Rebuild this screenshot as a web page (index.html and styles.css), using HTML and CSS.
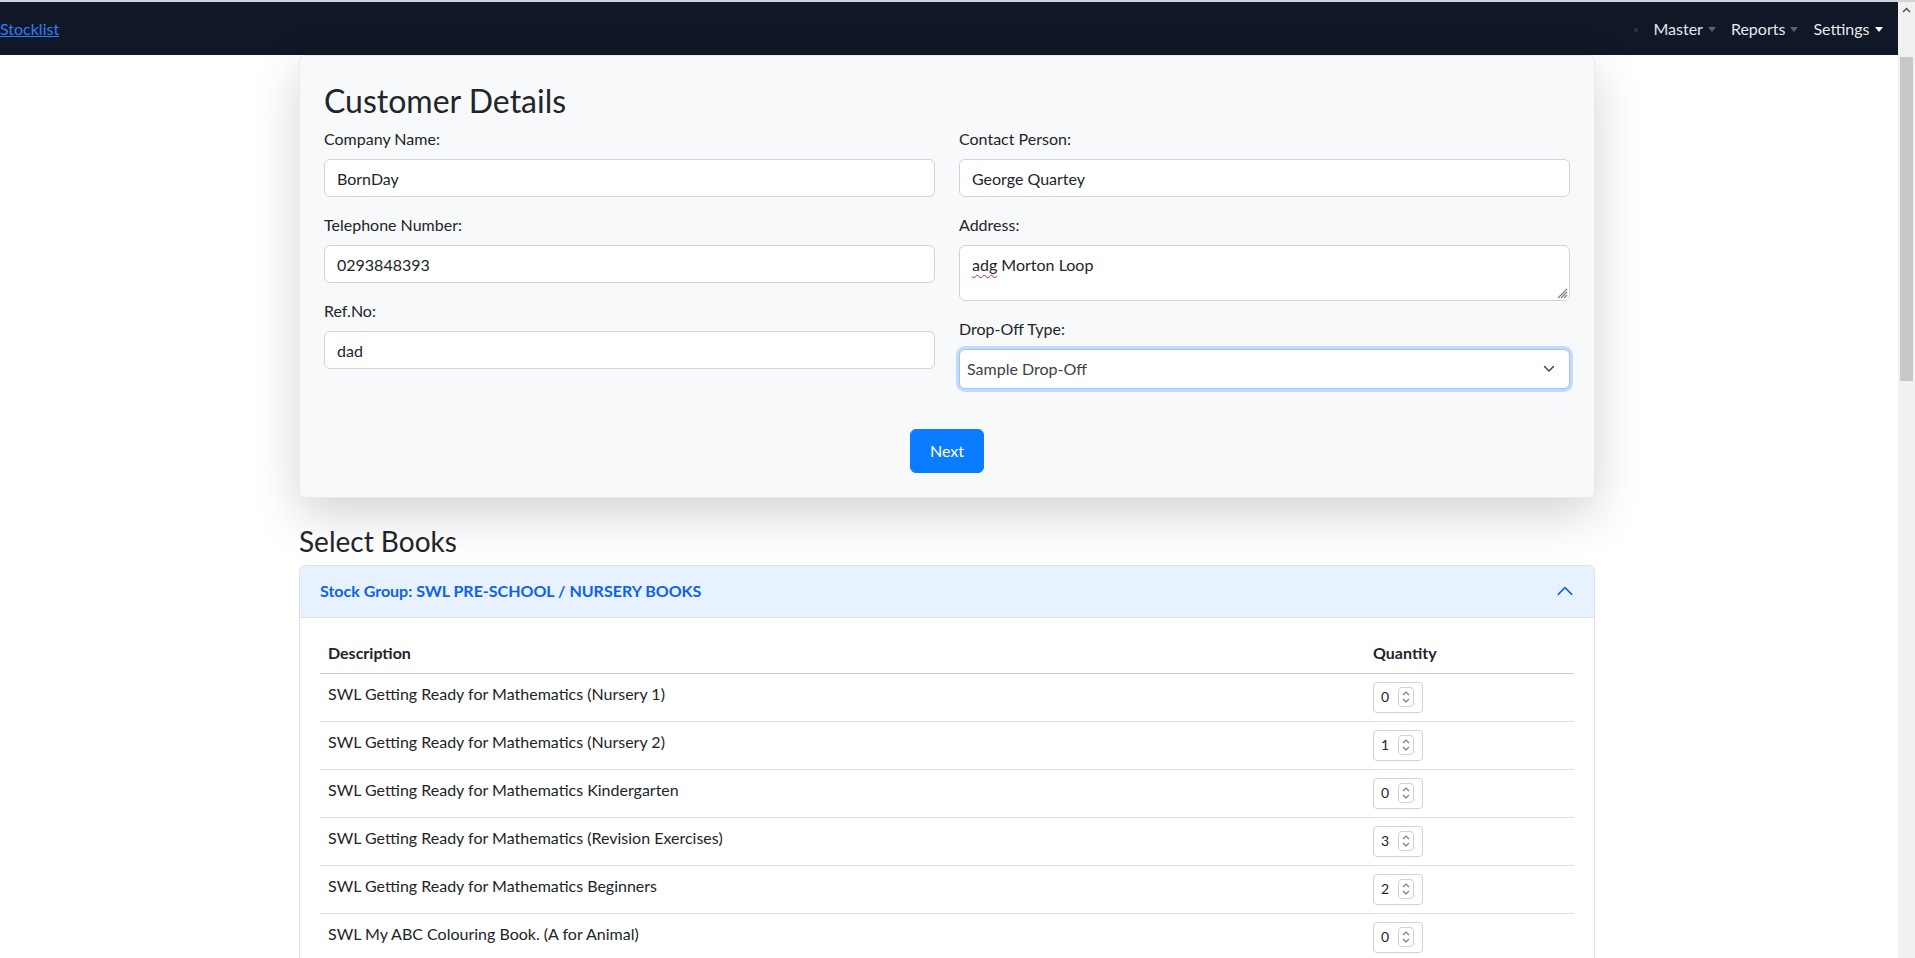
FILE: index.html
```html
<!DOCTYPE html>
<html lang="en">
<head>
<meta charset="utf-8">
<title>Stocklist</title>
<link rel="stylesheet" href="styles.css">
</head>
<body>
<div class="app">
  <nav class="topbar">
    <a class="brand" href="#">Stocklist</a>
    <ul class="nav-right">
      <li class="nav-item nav-dot-item"><span class="nav-dot"></span></li>
      <li class="nav-item">Master<span class="caret dim"></span></li>
      <li class="nav-item">Reports<span class="caret dim"></span></li>
      <li class="nav-item">Settings<span class="caret"></span></li>
    </ul>
  </nav>

  <main class="container">
    <section class="card">
      <h2 class="card-title">Customer Details</h2>
      <div class="form-grid">
        <div class="form-col">
          <div class="group">
            <label class="label">Company Name:</label>
            <input class="control" type="text" value="BornDay">
          </div>
          <div class="group">
            <label class="label">Telephone Number:</label>
            <input class="control" type="text" value="0293848393">
          </div>
          <div class="group">
            <label class="label">Ref.No:</label>
            <input class="control" type="text" value="dad">
          </div>
        </div>
        <div class="form-col">
          <div class="group">
            <label class="label">Contact Person:</label>
            <input class="control" type="text" value="George Quartey">
          </div>
          <div class="group">
            <label class="label">Address:</label>
            <div class="control textarea"><span class="typo">adg</span> Morton Loop
              <svg class="grip" width="14" height="14" viewBox="0 0 14 14"><path d="M13 4L4 13M13 7L7 13M13 10L10 13" stroke="#7a7a7a" stroke-width="1.1" fill="none"/></svg>
            </div>
          </div>
          <div class="group">
            <label class="label">Drop-Off Type:</label>
            <div class="control select">
              <span class="select-text">Sample Drop-Off</span>
              <svg width="16" height="12" viewBox="0 0 16 12"><polyline points="3.5,3.5 8,8 12.5,3.5" fill="none" stroke="#343a40" stroke-width="1.4" stroke-linecap="round" stroke-linejoin="round"/></svg>
            </div>
          </div>
        </div>
      </div>
      <div class="actions">
        <button class="btn-primary" type="button">Next</button>
      </div>
    </section>

    <h3 class="section-title">Select Books</h3>

    <div class="accordion">
      <div class="acc-header">
        <span class="acc-title">Stock Group: SWL PRE-SCHOOL / NURSERY BOOKS</span>
        <svg class="acc-chev" width="18" height="18" viewBox="0 0 16 16"><polyline points="2,11 8,5 14,11" fill="none" stroke="#0c63e4" stroke-width="1.3" stroke-linecap="round" stroke-linejoin="round"/></svg>
      </div>
      <div class="acc-body">
        <table class="books">
          <thead>
            <tr><th>Description</th><th class="qty-col">Quantity</th></tr>
          </thead>
          <tbody>
            <tr><td>SWL Getting Ready for Mathematics (Nursery 1)</td><td><div class="qty"><span>0</span><svg width="16" height="20" viewBox="0 0 16 20"><rect x="0.5" y="0.5" width="15" height="19" rx="3" fill="#fff" stroke="#d0d0d0"/><polyline points="5,8 8,5 11,8" fill="none" stroke="#777" stroke-width="1.1"/><polyline points="5,12 8,15 11,12" fill="none" stroke="#777" stroke-width="1.1"/></svg></div></td></tr>
            <tr><td>SWL Getting Ready for Mathematics (Nursery 2)</td><td><div class="qty"><span>1</span><svg width="16" height="20" viewBox="0 0 16 20"><rect x="0.5" y="0.5" width="15" height="19" rx="3" fill="#fff" stroke="#d0d0d0"/><polyline points="5,8 8,5 11,8" fill="none" stroke="#777" stroke-width="1.1"/><polyline points="5,12 8,15 11,12" fill="none" stroke="#777" stroke-width="1.1"/></svg></div></td></tr>
            <tr><td>SWL Getting Ready for Mathematics Kindergarten</td><td><div class="qty"><span>0</span><svg width="16" height="20" viewBox="0 0 16 20"><rect x="0.5" y="0.5" width="15" height="19" rx="3" fill="#fff" stroke="#d0d0d0"/><polyline points="5,8 8,5 11,8" fill="none" stroke="#777" stroke-width="1.1"/><polyline points="5,12 8,15 11,12" fill="none" stroke="#777" stroke-width="1.1"/></svg></div></td></tr>
            <tr><td>SWL Getting Ready for Mathematics (Revision Exercises)</td><td><div class="qty"><span>3</span><svg width="16" height="20" viewBox="0 0 16 20"><rect x="0.5" y="0.5" width="15" height="19" rx="3" fill="#fff" stroke="#d0d0d0"/><polyline points="5,8 8,5 11,8" fill="none" stroke="#777" stroke-width="1.1"/><polyline points="5,12 8,15 11,12" fill="none" stroke="#777" stroke-width="1.1"/></svg></div></td></tr>
            <tr><td>SWL Getting Ready for Mathematics Beginners</td><td><div class="qty"><span>2</span><svg width="16" height="20" viewBox="0 0 16 20"><rect x="0.5" y="0.5" width="15" height="19" rx="3" fill="#fff" stroke="#d0d0d0"/><polyline points="5,8 8,5 11,8" fill="none" stroke="#777" stroke-width="1.1"/><polyline points="5,12 8,15 11,12" fill="none" stroke="#777" stroke-width="1.1"/></svg></div></td></tr>
            <tr><td>SWL My ABC Colouring Book. (A for Animal)</td><td><div class="qty"><span>0</span><svg width="16" height="20" viewBox="0 0 16 20"><rect x="0.5" y="0.5" width="15" height="19" rx="3" fill="#fff" stroke="#d0d0d0"/><polyline points="5,8 8,5 11,8" fill="none" stroke="#777" stroke-width="1.1"/><polyline points="5,12 8,15 11,12" fill="none" stroke="#777" stroke-width="1.1"/></svg></div></td></tr>
          </tbody>
        </table>
      </div>
    </div>
  </main>
</div>

<div class="scrollbar">
  <svg class="sb-arrow" width="17" height="17" viewBox="0 0 17 17"><polyline points="5,10 8.5,6.5 12,10" fill="none" stroke="#505050" stroke-width="1.5"/></svg>
  <div class="sb-thumb"></div>
</div>
</body>
</html>
```
FILE: styles.css
```css
* { box-sizing: border-box; }

html, body {
  margin: 0;
  height: 958px;
  overflow: hidden;
}

body {
  font-family: Lato, "Noto Sans", "Liberation Sans", sans-serif;
  font-size: 16px;
  line-height: 1.5;
  color: #212529;
  background: #ffffff;
}

.app {
  margin-right: 17px;
}

/* ---------- top bar ---------- */
.topbar {
  height: 55px;
  border-top: 2px solid #d2d4d8;
  background: #101828;
  display: flex;
  align-items: center;
  justify-content: space-between;
  padding-right: 8px;
}

.brand {
  color: #2f7cf6;
  text-decoration: underline;
  font-size: 16px;
}

.nav-right {
  display: flex;
  align-items: center;
  list-style: none;
  margin: 0;
  padding: 0;
}

.nav-item {
  padding: 8px 7.5px;
  color: rgba(255, 255, 255, 0.92);
  white-space: nowrap;
  font-size: 16px;
}

.nav-dot {
  display: inline-block;
  width: 4px;
  height: 4px;
  border-radius: 50%;
  background: #2c3444;
  vertical-align: middle;
}

.caret {
  display: inline-block;
  margin-left: 5px;
  vertical-align: 3px;
  border-top: 5px solid #ffffff;
  border-left: 4px solid transparent;
  border-right: 4px solid transparent;
}

.caret.dim {
  border-top-color: #5a6170;
}

/* ---------- layout ---------- */
.container {
  width: 1296px;
  margin-left: 299px;
}

.card {
  background: #f8f9fa;
  border: 1px solid rgba(0, 0, 0, 0.06);
  border-radius: 6px;
  padding: 24px;
  box-shadow: 0 16px 48px rgba(0, 0, 0, 0.175);
}

.card-title {
  margin: 0 0 7px;
  padding-top: 2px;
  font-size: 32px;
  font-weight: 400;
  line-height: 1.2;
}

.form-grid {
  display: grid;
  grid-template-columns: 1fr 1fr;
  column-gap: 24px;
}

.form-col {
  display: flex;
  flex-direction: column;
}

.group {
  margin-bottom: 16px;
}

.label {
  display: block;
  margin-bottom: 8px;
}

.control {
  display: block;
  width: 100%;
  height: 38px;
  padding: 6px 12px;
  font: inherit;
  color: #212529;
  background: #ffffff;
  border: 1px solid #ced4da;
  border-radius: 6px;
}

.textarea {
  position: relative;
  height: 56px;
  padding-top: 7px;
}

.typo {
  text-decoration: underline wavy #e02020;
  text-decoration-thickness: 1px;
  text-underline-offset: 3px;
}

.grip {
  position: absolute;
  right: 1px;
  bottom: 1px;
}

.select {
  display: flex;
  align-items: center;
  justify-content: space-between;
  height: 40px;
  padding: 6px 12px 6px 7px;
  border-color: #9fc3fb;
  box-shadow: 0 0 0 3px rgba(13, 110, 253, 0.22);
  color: #3d4247;
}

.actions {
  display: flex;
  justify-content: center;
  margin-top: 24px;
}

.btn-primary {
  font: inherit;
  color: #ffffff;
  background: #0a7cff;
  border: 1px solid #0a7cff;
  border-radius: 6px;
  padding: 9px 19px;
  line-height: 24px;
}

.section-title {
  margin: 27px 0 6px;
  font-size: 28px;
  font-weight: 400;
  line-height: 1.2;
}

/* ---------- accordion ---------- */
.accordion {
  border: 1px solid #dee2e6;
  border-radius: 6px;
  background: #ffffff;
  overflow: hidden;
}

.acc-header {
  display: flex;
  align-items: center;
  justify-content: space-between;
  height: 52px;
  padding: 0 20px;
  background: #e7f1ff;
  border-bottom: 1px solid #dee2e6;
  color: #0c63e4;
}

.acc-title {
  font-size: 16px;
  font-weight: 700;
}

.acc-body {
  padding: 15px 20px;
}

.books {
  width: 100%;
  border-collapse: collapse;
}

.books th,
.books td {
  padding: 8px;
  text-align: left;
  vertical-align: top;
  border-bottom: 1px solid #dee2e6;
  font-size: 16px;
  line-height: 24px;
}

.books th {
  font-weight: 700;
  border-bottom-color: #c9ced3;
}

.qty-col {
  width: 209px;
}

.qty {
  display: flex;
  align-items: center;
  justify-content: space-between;
  width: 50px;
  height: 31px;
  padding: 0 8px 0 7px;
  border: 1px solid #ced4da;
  border-radius: 4px;
  background: #ffffff;
  font-size: 14px;
}

/* ---------- scrollbar ---------- */
.scrollbar {
  position: fixed;
  top: 0;
  right: 0;
  width: 17px;
  height: 958px;
  background: #f1f1f1;
  border-top: 2px solid #d2d4d8;
}

.sb-arrow {
  display: block;
}

.sb-thumb {
  margin: 38px 2px 0;
  height: 324px;
  background: #c8c8c8;
}
```
